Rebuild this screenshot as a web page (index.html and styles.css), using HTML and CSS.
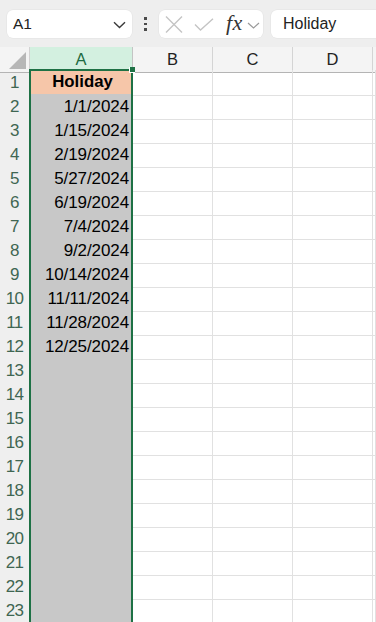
FILE: index.html
```html
<!DOCTYPE html>
<html>
<head>
<meta charset="utf-8">
<link rel="stylesheet" href="styles.css">
</head>
<body>
<div class="toolbar">
  <div class="namebox">
    <span class="ref">A1</span>
    <svg class="chev" width="13" height="8" viewBox="0 0 13 8"><path d="M1 1.2 L6.5 6.5 L12 1.2" fill="none" stroke="#3a3a3a" stroke-width="1.4"/></svg>
  </div>
  <div class="grip"><i></i><i></i><i></i></div>
  <div class="fxbox">
    <svg class="ic-x" width="18" height="17" viewBox="0 0 18 17"><path d="M1 0.5 L17 16.5 M17 0.5 L1 16.5" fill="none" stroke="#c4c4c4" stroke-width="1.4"/></svg>
    <svg class="ic-check" width="20" height="13" viewBox="0 0 20 13"><path d="M1 6.5 L6.5 12 L19 0.8" fill="none" stroke="#c4c4c4" stroke-width="1.4"/></svg>
    <span class="fx">fx</span>
    <svg class="chev2" width="13" height="7" viewBox="0 0 13 7"><path d="M1 1 L6.5 6 L12 1" fill="none" stroke="#9a9a9a" stroke-width="1.2"/></svg>
  </div>
  <div class="formula">Holiday</div>
</div>

<div class="sheet">
  <div class="row head">
    <div class="corner"><span class="tri"></span></div>
    <div class="ch sel">A</div>
    <div class="ch">B</div>
    <div class="ch">C</div>
    <div class="ch">D</div>
    <div class="ch last"></div>
  </div>
  <div class="row"><div class="rh">1</div><div class="c a title">Holiday</div><div class="c"></div><div class="c"></div><div class="c"></div><div class="c"></div></div>
  <div class="row"><div class="rh">2</div><div class="c a date">1/1/2024</div><div class="c"></div><div class="c"></div><div class="c"></div><div class="c"></div></div>
  <div class="row"><div class="rh">3</div><div class="c a date">1/15/2024</div><div class="c"></div><div class="c"></div><div class="c"></div><div class="c"></div></div>
  <div class="row"><div class="rh">4</div><div class="c a date">2/19/2024</div><div class="c"></div><div class="c"></div><div class="c"></div><div class="c"></div></div>
  <div class="row"><div class="rh">5</div><div class="c a date">5/27/2024</div><div class="c"></div><div class="c"></div><div class="c"></div><div class="c"></div></div>
  <div class="row"><div class="rh">6</div><div class="c a date">6/19/2024</div><div class="c"></div><div class="c"></div><div class="c"></div><div class="c"></div></div>
  <div class="row"><div class="rh">7</div><div class="c a date">7/4/2024</div><div class="c"></div><div class="c"></div><div class="c"></div><div class="c"></div></div>
  <div class="row"><div class="rh">8</div><div class="c a date">9/2/2024</div><div class="c"></div><div class="c"></div><div class="c"></div><div class="c"></div></div>
  <div class="row"><div class="rh">9</div><div class="c a date">10/14/2024</div><div class="c"></div><div class="c"></div><div class="c"></div><div class="c"></div></div>
  <div class="row"><div class="rh">10</div><div class="c a date">11/11/2024</div><div class="c"></div><div class="c"></div><div class="c"></div><div class="c"></div></div>
  <div class="row"><div class="rh">11</div><div class="c a date">11/28/2024</div><div class="c"></div><div class="c"></div><div class="c"></div><div class="c"></div></div>
  <div class="row"><div class="rh">12</div><div class="c a date">12/25/2024</div><div class="c"></div><div class="c"></div><div class="c"></div><div class="c"></div></div>
  <div class="row"><div class="rh">13</div><div class="c a"></div><div class="c"></div><div class="c"></div><div class="c"></div><div class="c"></div></div>
  <div class="row"><div class="rh">14</div><div class="c a"></div><div class="c"></div><div class="c"></div><div class="c"></div><div class="c"></div></div>
  <div class="row"><div class="rh">15</div><div class="c a"></div><div class="c"></div><div class="c"></div><div class="c"></div><div class="c"></div></div>
  <div class="row"><div class="rh">16</div><div class="c a"></div><div class="c"></div><div class="c"></div><div class="c"></div><div class="c"></div></div>
  <div class="row"><div class="rh">17</div><div class="c a"></div><div class="c"></div><div class="c"></div><div class="c"></div><div class="c"></div></div>
  <div class="row"><div class="rh">18</div><div class="c a"></div><div class="c"></div><div class="c"></div><div class="c"></div><div class="c"></div></div>
  <div class="row"><div class="rh">19</div><div class="c a"></div><div class="c"></div><div class="c"></div><div class="c"></div><div class="c"></div></div>
  <div class="row"><div class="rh">20</div><div class="c a"></div><div class="c"></div><div class="c"></div><div class="c"></div><div class="c"></div></div>
  <div class="row"><div class="rh">21</div><div class="c a"></div><div class="c"></div><div class="c"></div><div class="c"></div><div class="c"></div></div>
  <div class="row"><div class="rh">22</div><div class="c a"></div><div class="c"></div><div class="c"></div><div class="c"></div><div class="c"></div></div>
  <div class="row"><div class="rh">23</div><div class="c a"></div><div class="c"></div><div class="c"></div><div class="c"></div><div class="c"></div></div>

  <div class="selection"></div>
  <div class="handle"></div>
</div>
</body>
</html>
```

FILE: styles.css
```css
* { box-sizing: border-box; }
html, body { margin: 0; padding: 0; }
body {
  width: 376px;
  height: 622px;
  overflow: hidden;
  background: #ffffff;
  font-family: "Liberation Sans", Arial, sans-serif;
  color: #000;
}

/* ---------- formula toolbar ---------- */
.toolbar {
  height: 47px;
  background: #eeeeee;
  display: flex;
  align-items: flex-start;
  padding: 10px 0 0 7px;
}
.namebox {
  width: 125px;
  height: 28px;
  background: #ffffff;
  border-radius: 6px;
  display: flex;
  align-items: center;
  justify-content: space-between;
  padding: 0 6px 0 6px;
  box-shadow: 0 0 0 0.5px #e2e2e2;
}
.ref { font-size: 15.5px; color: #222; }
.chev { margin-top: 1px; }
.grip {
  width: 27px;
  height: 28px;
  display: flex;
  flex-direction: column;
  align-items: center;
  justify-content: center;
  gap: 3px;
}
.grip i {
  display: block;
  width: 2.5px;
  height: 2.5px;
  background: #4a4a4a;
}
.fxbox {
  width: 104px;
  height: 28px;
  background: #ffffff;
  border-radius: 6px;
  display: flex;
  align-items: center;
  padding-left: 6px;
  box-shadow: 0 0 0 0.5px #e2e2e2;
}
.ic-x { margin-right: 11px; }
.ic-check { margin-right: 12px; margin-top: 1px; }
.fx {
  font-family: "Liberation Serif", "Times New Roman", serif;
  font-style: italic;
  font-size: 22px;
  color: #333333;
  margin-right: 4px;
  margin-top: -3px;
  letter-spacing: 0.5px;
}
.chev2 { margin-top: 2px; }
.formula {
  flex: 1;
  height: 28px;
  margin-left: 8px;
  background: #ffffff;
  border-radius: 6px 0 0 6px;
  display: flex;
  align-items: center;
  padding-left: 12px;
  font-size: 16px;
  color: #222;
  box-shadow: 0 0 0 0.5px #e2e2e2;
}

/* ---------- sheet grid ---------- */
.sheet { position: relative; }
.row {
  display: grid;
  grid-template-columns: 30px 103px 80px 80px 80px 1fr;
  height: 24px;
}
.row.head { height: 23px; }

.corner {
  position: relative;
  background: #f4f4f4;
  border-right: 1px solid #d2d2d2;
  border-bottom: 1px solid #b4b4b4;
}
.tri {
  position: absolute;
  right: 3px;
  bottom: 3px;
  width: 0;
  height: 0;
  border-left: 17px solid transparent;
  border-bottom: 17px solid #b7b7b7;
}
.ch {
  background: #f4f4f4;
  border-right: 1px solid #d4d4d4;
  border-bottom: 1px solid #b4b4b4;
  text-align: center;
  font-size: 16.5px;
  line-height: 24px;
  color: #222;
}
.ch.sel {
  background: #d3f0e0;
  color: #1d6b41;
  border-bottom: 2px solid #1e7145;
  border-right: 1px solid #c4c4c4;
}
.ch.last { border-right: none; }

.rh {
  background: #efefef;
  border-right: 1px solid #c9c9c9;
  border-bottom: 1px solid #d6d6d6;
  text-align: center;
  font-size: 17px;
  line-height: 25px;
  color: #3f6652;
  letter-spacing: -0.6px;
}
.c {
  border-right: 1px solid #e1e1e1;
  border-bottom: 1px solid #e1e1e1;
}
.c.a {
  background: #c8c8c8;
  border-right: none;
  border-bottom: 1px solid #a9a9a9;
}
.c.a.title,
.c.a.date { border-bottom: 1px solid #111; }
.title {
  background: #f6c6a9 !important;
  font-weight: bold;
  font-size: 16.8px;
  text-align: center;
  line-height: 24px;
  padding-left: 2px;
}
.date {
  text-align: right;
  font-size: 17px;
  line-height: 25px;
  padding-right: 4px;
  letter-spacing: -0.1px;
}

/* selection overlay */
.selection {
  position: absolute;
  left: 29px;
  top: 22px;
  width: 104px;
  bottom: 0;
  border: 2px solid #1e7145;
  border-bottom: none;
  pointer-events: none;
}
.handle {
  position: absolute;
  left: 129px;
  top: 20px;
  width: 6px;
  height: 6px;
  background: #1e7145;
  border: 1px solid #ffffff;
  border-top: none;
  border-right: none;
}
```
